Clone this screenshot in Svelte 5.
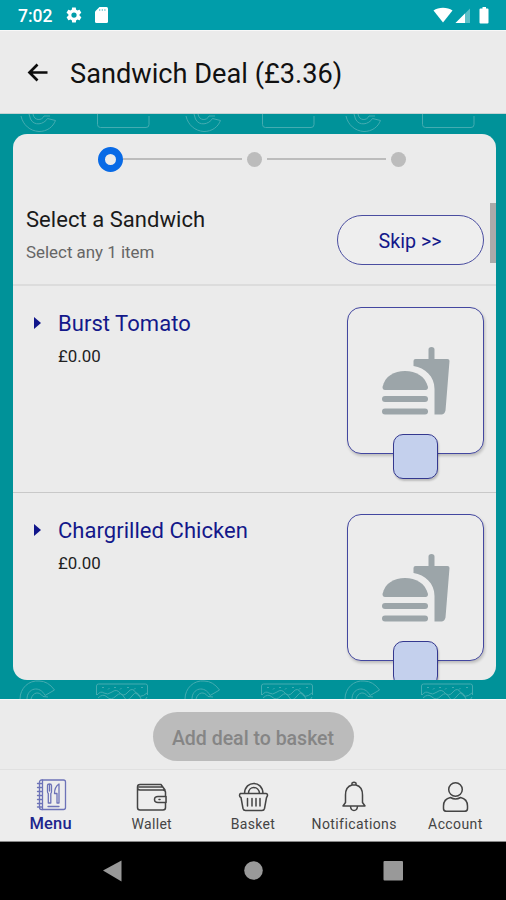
<!--
  Meal deal builder: pick one item per step, then add the deal to the basket.
 -->
<script>
  let dealName = 'Sandwich Deal (£3.36)';
  let step = 0;
  const steps = ['Sandwich', 'Side', 'Drink'];

  const items = [
    { name: 'Burst Tomato', price: '£0.00' },
    { name: 'Chargrilled Chicken', price: '£0.00' }
  ];

  const tabs = ['Menu', 'Wallet', 'Basket', 'Notifications', 'Account'];
  let activeTab = 'Menu';

  //The wallpaper repeats the same two doodles across the screen.
  const doodles = [0, 165, 325];
</script>

<div class="screen">
  <div class="status">
    <span class="time">7:02</span>
    <svg class="gear" width="18" height="18" viewBox="0 0 24 24" fill="#fff">
      <path d="M19.4 13c0-.3.1-.6.1-1s0-.7-.1-1l2.1-1.600c.2-.2.2-.4.1-.6l-2-3.500c-.1-.2-.4-.3-.6-.2l-2.500 1c-.5-.4-1.100-.7-1.700-1l-.4-2.600c0-.3-.2-.5-.5-.5h-4c-.3 0-.5.2-.5.5l-.4 2.600c-.6.3-1.200.6-1.700 1l-2.500-1c-.2-.1-.5 0-.6.2l-2 3.500c-.1.2-.1.5.1.6L4.500 11a8 8 0 0 0 0 2l-2.100 1.600c-.2.2-.2.4-.1.6l2 3.500c.1.2.4.3.6.2l2.500-1c.5.4 1.100.7 1.700 1l.4 2.600c0 .3.2.5.5.5h4c.3 0 .5-.2.5-.5l.4-2.600c.6-.3 1.200-.6 1.700-1l2.500 1c.2.1.5 0 .6-.2l2-3.500c.1-.2.1-.5-.1-.6zM12 15.500a3.500 3.500 0 1 1 0-7 3.500 3.500 0 0 1 0 7z"/>
    </svg>
    <svg class="sd" width="13" height="16" viewBox="0 0 13 16">
      <path d="M4.500 0H11.500Q13 0 13 1.500V14.500Q13 16 11.500 16H1.500Q0 16 0 14.500V4.500z" fill="#fff"/>
      <path d="M4.700 2v2M7.300 2v2M9.900 2v2" stroke="#7fcdd3" stroke-width="1.100"/>
    </svg>
    <svg class="signal" width="58" height="18" viewBox="0 0 58 18">
      <path d="M-1.500 3.600C3.500-.1 12.500-.1 17.500 3.600L8 15.500z" fill="#fff"/>
      <path d="M35 1.500V16H20.500z" fill="#5cc0c8"/>
      <path d="M30 6.500V16H20.500z" fill="#fff"/>
      <path d="M47.500 0h3.500v1.500h1.500q1 0 1 1V15.500q0 1-1 1h-7q-1 0-1-1V2.500q0-1 1-1h2z" fill="#fff"/>
    </svg>
  </div>

  <header>
    <svg width="22" height="20" viewBox="0 0 22 20" fill="none" stroke="#0c0c0c" stroke-width="2.700">
      <path d="M10.500 1.500L2.500 9.500L10.500 17.500M2.500 9.500H20.500"/>
    </svg>
    <h1>{dealName}</h1>
  </header>

  <main>
    <svg class="strip" width="506" height="20" viewBox="0 0 506 20" fill="none" stroke="#44acb1" stroke-width="1">
      {#each doodles as x}
        <g transform="translate({x} 0)">
          <path d="M21 2C23 11 30 17 39 17.500C47 17.500 53 13 55.500 6.500L47.500 4.500C44 10.500 34 12.500 30.500 5L29 0"/>
          <path d="M33 0C34 7 42 7 44 2H50"/>
          <path d="M97.500 0V10.500Q97.500 13.500 100.500 13.500H146Q149 13.500 149 10.500V2"/>
        </g>
      {/each}
    </svg>

    <div class="card">
      <div class="stepper">
        {#each steps as name, i}
          {#if i > 0}<span class="line" class:first={i === 1}></span>{/if}
          <span class="dot" class:current={i === step}></span>
        {/each}
      </div>

      <div class="list">
        <div class="intro">
          <div>
            <h2>Select a Sandwich</h2>
            <p>Select any 1 item</p>
          </div>
          <button class="skip">Skip &gt;&gt;</button>
        </div>

        {#each items as item}
          <div class="item">
            <span class="caret"></span>
            <div class="details">
              <h3>{item.name}</h3>
              <p>{item.price}</p>
            </div>
            <div class="thumb">
              <svg width="68" height="69" viewBox="0 0 68 69" fill="#9ca5a9">
                <path d="M0.500 40C3 29 12 24 23 24S43 29 46 40Q46 43 43.500 43H3Q.5 43 .5 40z"/>
                <rect x="0" y="49" width="46" height="6" rx="3"/>
                <rect x="0" y="61.500" width="46" height="6" rx="3"/>
                <path d="M46.500 12V2.500Q46.500 0 49.500 0T52.500 2.500V12H65.500Q67.500 12 67.500 14L63.500 63.500Q62.500 67.500 59.500 67.500H52.500V42C52.500 29 43 21 31.500 19V14Q31.500 12 33.500 12z"/>
              </svg>
              <span class="check"></span>
            </div>
          </div>
        {/each}
        <span class="scrollbar"></span>
      </div>
    </div>

    <svg class="strip" width="506" height="19" viewBox="0 0 506 19" fill="none" stroke="#44acb1" stroke-width="1">
      {#each doodles as x}
        <g transform="translate({x} 0)">
          <path d="M20 19C20 8 29 0 39 1Q48 1 54.500 10L45 15.500C40 5 27 8 27 19"/>
          <path d="M31 19C33 12 39 11 43 16.500L48 17"/>
          <path d="M96.500 15V6Q96.500 4 98.500 4H145.500Q147.500 4 147.500 6V15M97 15Q100.500 10.500 104 13T112 12T120 13T128 12T136 13T147 13M98 18Q103 13 107 17T116 16T124 17T132 16T140 17T147 17"/>
          <path d="M102 7.500h2M108 9.500l1.500-1.500M114 7.500h2M120 9.500l1.500-1.500M127 7.500h2M134 9.500l1.500-1.500M141 7.500h2"/>
        </g>
      {/each}
    </svg>
  </main>

  <div class="action">
    <button disabled>Add deal to basket</button>
  </div>

  <nav>
    {#each tabs as tab}
      <div class="tab" class:active={tab === activeTab} class:wide={tab === 'Notifications' || tab === 'Account'}>
        <svg width="34" height="34" viewBox="0 0 34 34" fill="none" stroke="currentColor" stroke-width="1.500" stroke-linejoin="round" stroke-linecap="round">
          {#if tab === 'Menu'}
            <g stroke="#6d73b8" stroke-width="1.300">
              <rect x="5.500" y="2" width="26" height="29.500" rx="2"/>
              <path d="M8.500 2V31.500M3.500 5.500h4M3.500 9.500h4M3.500 13.500h4M3.500 17.500h4M3.500 21.500h4M3.500 25.500h4M3.500 29h4" />
              <path d="M13.500 7.500Q13.500 6 15.500 6T17.500 7.500V13.500Q17.500 15 16.800 15.500V25H14.300V15.500Q13.500 15 13.500 13.500zM15.500 6.500V13M25 6Q20.500 9 20.500 15.500H23V25H25zM14 28.500H25"/>
            </g>
          {:else if tab === 'Wallet'}
            <path d="M2.500 9V29.500Q2.500 32 5 32H28Q30.500 32 30.500 29.500V14.500Q30.500 12 28 12H5Q2.500 12 2.500 9Q2.500 6.500 5 6.500H26L30 12M4 9H27"/>
            <path d="M31 18.500H23Q19.500 18.500 19.500 21.500T23 24.500H31z" fill="#ebebeb"/>
            <path d="M24 21.500h1"/>
          {:else if tab === 'Basket'}
            <path d="M4.500 15.500H30Q31.500 15.500 31.500 17.500Q31 19 30.500 19.500L28.500 30.500Q28 32.500 26 32.500H9.500Q7.500 32.500 7 30.500L5 19.500Q3.500 19 3.500 17.500T4.500 15.500zM8.500 15.500C9 2 26.500 2 27 15.500M12.500 15.500C12.500 7.500 23 7.500 23.500 15.500M11.500 20.500v7.500M16 20.500v7.500M20 20.500v7.500M24 20.500v7.500"/>
          {:else if tab === 'Notifications'}
            <path d="M6 28L8.500 24.500V17C8.500 10.500 11 8 15 7V5Q17 3.500 19 5V7C23 8 25.500 10.500 25.500 17V24.500L28 28zM13.500 28.500Q14 32.500 17 32.500T20.500 28.500M15 7H19"/>
          {:else}
            <circle cx="17.500" cy="11.500" r="6.800"/>
            <path d="M12.500 19.500Q17.500 22.500 22.500 19.500Q29.500 21 29.500 28V30.500Q29.500 33.300 26.500 33.300H8.500Q5.500 33.300 5.500 30.500V28Q5.500 21 12.500 19.500z"/>
          {/if}
        </svg>
        <span>{tab}</span>
      </div>
    {/each}
  </nav>

  <div class="system">
    <svg width="506" height="58" viewBox="0 0 506 58" fill="#999">
      <path d="M103 28.500L121.500 18.500V39.500z"/>
      <circle cx="253.500" cy="28.500" r="9.300"/>
      <rect x="383.500" y="19" width="19.500" height="19.500" rx="1"/>
    </svg>
  </div>
</div>

<style>
  :global(body) {
    margin: 0;
    background-color: #000;
  }

  .screen {
    display: flex;
    flex-direction: column;
    width: 506px;
    height: 900px;
    overflow: hidden;
    font-family: Roboto, sans-serif;
    background-color: #ebebeb;
  }

  h1, h2, h3, p {
    margin: 0;
    font-weight: 400;
    white-space: nowrap;
  }

  svg {
    display: block;
    flex: none;
  }

  button {
    font-family: inherit;
    padding: 0;
  }

  .status {
    display: flex;
    align-items: center;
    box-sizing: border-box;
    height: 30px;
    padding: 1px 13px 0 18px;
    color: #fff;
    background-color: #009daa;
  }

  .time {
    width: 47px;
    font-size: 17.5px;
    font-weight: 500;
    line-height: 30px;
  }

  .gear {
    margin-top: -1px;
  }

  .sd {
    margin-left: 12px;
    margin-top: -1px;
  }

  .signal {
    margin-left: auto;
    overflow: visible;
  }

  header {
    display: flex;
    align-items: center;
    box-sizing: border-box;
    height: 84px;
    padding: 2px 27px 0;
    gap: 21px;
    border-top: 1px solid #f8f8f8;
    border-bottom: 1px solid #c5d3d3;
  }

  h1 {
    margin-top: 2px;
    font-size: 27.2px;
    line-height: 36px;
    color: #111;
  }

  main {
    height: 585px;
    background-color: #009299;
  }

  .card {
    display: flex;
    flex-direction: column;
    height: 546px;
    margin: 0 10.500px 0 13px;
    overflow: hidden;
    border-radius: 14px;
    background-color: #ebebeb;
  }

  .stepper {
    display: flex;
    align-items: center;
    flex: none;
    height: 50px;
    padding-left: 84.500px;
  }

  .dot {
    width: 15px;
    height: 15px;
    border-radius: 50%;
    background-color: #bcbcbc;
  }

  .dot.current {
    box-sizing: border-box;
    width: 25px;
    height: 25px;
    border: 7.500px solid #086ae6;
    background-color: #ebebeb;
  }

  .line {
    width: 119px;
    height: 2px;
    margin: 0 5px;
    background-color: #bcbcbc;
  }

  .line.first {
    margin-left: 0;
  }

  .list {
    position: relative;
    flex: 1;
    overflow: hidden;
  }

  .intro {
    display: flex;
    justify-content: space-between;
    box-sizing: border-box;
    height: 102px;
    padding: 21px 12px 0 13px;
    border-bottom: 2px solid #dcdcdc;
  }

  h2 {
    margin-top: 1px;
    font-size: 22px;
    line-height: 28px;
    letter-spacing: 0.04px;
    color: #1a1a1a;
  }

  .intro p {
    margin-top: 6px;
    font-size: 16.9px;
    line-height: 24px;
    color: #666;
  }

  .skip {
    width: 147px;
    height: 50px;
    margin-top: 10px;
    padding-top: 2px;
    border: 1.500px solid #4a4da0;
    border-radius: 25px;
    background-color: #eee;
    color: #13188a;
    font-size: 19.7px;
  }

  .item {
    display: flex;
    box-sizing: border-box;
    height: 206.500px;
    padding: 21px 12px 0 21px;
    border-bottom: 1px solid #c8c8c8;
  }

  .caret {
    margin-top: 10px;
    width: 0;
    height: 0;
    border-top: 6px solid transparent;
    border-bottom: 6px solid transparent;
    border-left: 7px solid #10158a;
  }

  .details {
    flex: 1;
    margin-left: 17px;
    padding-top: 3px;
  }

  h3 {
    font-size: 22px;
    line-height: 28px;
    letter-spacing: 0.04px;
    color: #13188a;
  }

  .details p {
    margin-top: 6px;
    font-size: 16.9px;
    line-height: 24px;
    color: #222;
  }

  .thumb {
    position: relative;
    display: flex;
    justify-content: center;
    box-sizing: border-box;
    width: 137px;
    height: 147px;
    padding: 39px 0 0 1px;
    border: 1.500px solid #4347a0;
    border-radius: 14px;
    box-shadow: 1px 2px 3px rgba(0, 0, 0, 0.2);
    background-color: #ececec;
  }

  .check {
    position: absolute;
    left: 45px;
    bottom: -26px;
    box-sizing: border-box;
    width: 45px;
    height: 45px;
    border: 1.500px solid #34388f;
    border-radius: 10px;
    background-color: #c4d0ed;
    box-shadow: 1px 2px 2px rgba(0, 0, 0, 0.2);
  }

  .scrollbar {
    position: absolute;
    top: 19px;
    right: 0;
    width: 6px;
    height: 60px;
    background-color: #aaa;
  }

  .action {
    display: flex;
    justify-content: center;
    box-sizing: border-box;
    height: 71px;
    padding-top: 12px;
    border-top: 1px solid #f8f8f8;
    border-bottom: 1px solid #e0e0e0;
  }

  .action button {
    width: 201px;
    height: 49px;
    padding-top: 3px;
    border: 0;
    border-radius: 25px;
    background-color: #bbb;
    color: #858585;
    font-size: 19.5px;
    font-weight: 500;
  }

  nav {
    display: flex;
    box-sizing: border-box;
    height: 72px;
    border-bottom: 1px solid #888;
    background-color: #ededed;
  }

  .tab {
    display: flex;
    flex: 1;
    flex-direction: column;
    align-items: center;
    padding-top: 8px;
    color: #444;
    font-size: 14px;
    letter-spacing: 0.3px;
  }

  .tab span {
    margin-top: 3px;
    line-height: 18px;
  }

  .tab.wide {
    letter-spacing: 0.4px;
  }

  .tab.active {
    color: #20258c;
    font-size: 16.5px;
    font-weight: 500;
    letter-spacing: 0.2px;
  }

  .system {
    height: 58px;
    background-color: #000;
  }
</style>
